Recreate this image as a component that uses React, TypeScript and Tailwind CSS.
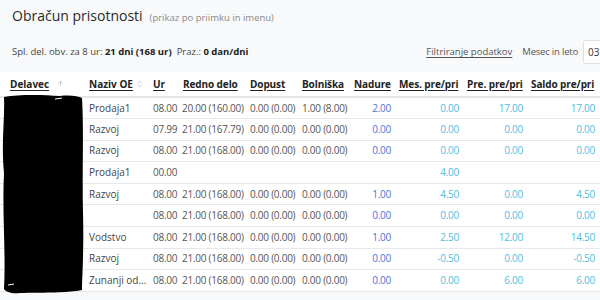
import { ArrowUp, ChevronsUpDown } from 'lucide-react';

interface Row {
  oe: string;
  ur: string;
  redno: string;
  dopust: string;
  bolniska: string;
  nadure: string;
  mes: string;
  pre: string;
  saldo: string;
}

const rows: Row[] = [
  { oe: 'Prodaja1', ur: '08.00', redno: '20.00 (160.00)', dopust: '0.00 (0.00)', bolniska: '1.00 (8.00)', nadure: '2.00', mes: '0.00', pre: '17.00', saldo: '17.00' },
  { oe: 'Razvoj', ur: '07.99', redno: '21.00 (167.79)', dopust: '0.00 (0.00)', bolniska: '0.00 (0.00)', nadure: '0.00', mes: '0.00', pre: '0.00', saldo: '0.00' },
  { oe: 'Razvoj', ur: '08.00', redno: '21.00 (168.00)', dopust: '0.00 (0.00)', bolniska: '0.00 (0.00)', nadure: '0.00', mes: '0.00', pre: '0.00', saldo: '0.00' },
  { oe: 'Prodaja1', ur: '00.00', redno: '', dopust: '', bolniska: '', nadure: '', mes: '4.00', pre: '', saldo: '' },
  { oe: 'Razvoj', ur: '08.00', redno: '21.00 (168.00)', dopust: '0.00 (0.00)', bolniska: '0.00 (0.00)', nadure: '1.00', mes: '4.50', pre: '0.00', saldo: '4.50' },
  { oe: '', ur: '08.00', redno: '21.00 (168.00)', dopust: '0.00 (0.00)', bolniska: '0.00 (0.00)', nadure: '0.00', mes: '0.00', pre: '0.00', saldo: '0.00' },
  { oe: 'Vodstvo', ur: '08.00', redno: '21.00 (168.00)', dopust: '0.00 (0.00)', bolniska: '0.00 (0.00)', nadure: '1.00', mes: '2.50', pre: '12.00', saldo: '14.50' },
  { oe: 'Razvoj', ur: '08.00', redno: '21.00 (168.00)', dopust: '0.00 (0.00)', bolniska: '0.00 (0.00)', nadure: '0.00', mes: '-0.50', pre: '0.00', saldo: '-0.50' },
  { oe: 'Zunanji od...', ur: '08.00', redno: '21.00 (168.00)', dopust: '0.00 (0.00)', bolniska: '0.00 (0.00)', nadure: '0.00', mes: '0.00', pre: '6.00', saldo: '6.00' },
];

const headers = ['Ur', 'Redno delo', 'Dopust', 'Bolniška', 'Nadure', 'Mes. pre/pri', 'Pre. pre/pri', 'Saldo pre/pri'];

export default function App() {
  return (
    <div
      className="relative w-[600px] h-[300px] overflow-hidden bg-[#f8f9fa] text-[#3a3a3a]"
      style={{ fontFamily: '"Open Sans", "Noto Sans", sans-serif' }}
    >
      {/* Title */}
      <div className="pl-3 pt-[5px] flex items-baseline gap-[7px]">
        <h1 className="text-[14px] font-normal text-[#2a2a2a]">Obračun prisotnosti</h1>
        <span className="text-[9.5px] text-[#8a8a8a]">(prikaz po priimku in imenu)</span>
      </div>

      {/* Info + filters (the month picker runs past the right edge) */}
      <div className="mt-[14px] pl-3 w-[640px] flex items-center h-[24px]">
        <div className="text-[9.5px] text-[#444]">
          Spl. del. obv. za 8 ur: <b className="text-[#222]">21 dni (168 ur)</b>
          <span className="ml-[5px]">Praz.: </span>
          <b className="text-[#222]">0 dan/dni</b>
        </div>
        <div className="ml-auto flex items-center text-[9.5px] text-[#555]">
          <span className="underline underline-offset-2">Filtriranje podatkov</span>
          <span className="ml-[10px] tracking-[-0.2px]">Mesec in leto</span>
          <div className="ml-[5px] h-[24px] w-[57px] bg-white border border-[#dcdfe3] rounded-[3px] pl-[4px] flex items-center text-[10px] text-[#333]">
            03
          </div>
        </div>
      </div>

      {/* Table */}
      <table className="mt-[8px] w-[600px] table-fixed border-collapse bg-white text-[10px]">
        <colgroup>
          <col className="w-[85px]" />
          <col className="w-[64px]" />
          <col className="w-[30px]" />
          <col className="w-[67px]" />
          <col className="w-[52px]" />
          <col className="w-[52px]" />
          <col className="w-[45px]" />
          <col className="w-[68px]" />
          <col className="w-[64px]" />
          <col className="w-[73px]" />
        </colgroup>
        <thead>
          <tr className="h-[25px] border-b-2 border-[#e3e6ea]">
            <th className="pl-[10px] text-left font-bold text-[#222]">
              <span className="underline underline-offset-2">Delavec</span>
              <ArrowUp className="inline ml-[8px] -mt-[2px] text-[#aaa]" size={7} strokeWidth={2} />
            </th>
            <th className="pl-[4px] text-left font-bold text-[#222] whitespace-nowrap">
              <span className="underline underline-offset-2">Naziv OE</span>
              <ChevronsUpDown className="inline ml-[3px] -mt-[2px] text-[#aaa]" size={8} strokeWidth={2} />
            </th>
            {headers.map((h) => (
              <th key={h} className="pl-[4px] text-left font-bold text-[#222] whitespace-nowrap tracking-[-0.1px]">
                <span className="underline underline-offset-2">{h}</span>
              </th>
            ))}
          </tr>
        </thead>
        <tbody className="tracking-[-0.25px]">
          {rows.map((r, i) => (
            <tr key={i} className="h-[21.6px] border-b border-[#e6e8eb] whitespace-nowrap">
              <td />
              <td className="pl-[4px] text-[#444] overflow-hidden tracking-normal">{r.oe}</td>
              <td className="pl-[4px] text-[#555]">{r.ur}</td>
              <td className="pl-[3px] text-[#555]">{r.redno}</td>
              <td className="pl-[4px] text-[#555]">{r.dopust}</td>
              <td className="pl-[4px] text-[#555]">{r.bolniska}</td>
              <td className="pr-[4px] text-right text-[#4a74d4]">{r.nadure}</td>
              <td className="pr-[4px] text-right text-[#4cc0e0]">{r.mes}</td>
              <td className="pr-[4px] text-right text-[#4cc0e0]">{r.pre}</td>
              <td className="pr-[5px] text-right text-[#4cc0e0]">{r.saldo}</td>
            </tr>
          ))}
        </tbody>
      </table>

      {/* Redaction scribble over the Delavec column */}
      <svg className="absolute left-0 top-[93px]" width="86" height="205" viewBox="0 0 86 205">
        <path
          d="M4 4 C20 1 45 2 60 3 C70 2 78 3 82 5 C84 40 82 80 83 120 C84 160 82 185 82 197 C60 201 35 199 20 200 C12 201 6 199 4 196 C6 160 2 120 4 80 C1 50 5 25 4 4 Z"
          fill="#000"
        />
        <path d="M55 6 L62 5" stroke="#fff" strokeWidth="1" />
        <path d="M8 192 L14 191" stroke="#fff" strokeWidth="1" />
      </svg>
    </div>
  );
}
